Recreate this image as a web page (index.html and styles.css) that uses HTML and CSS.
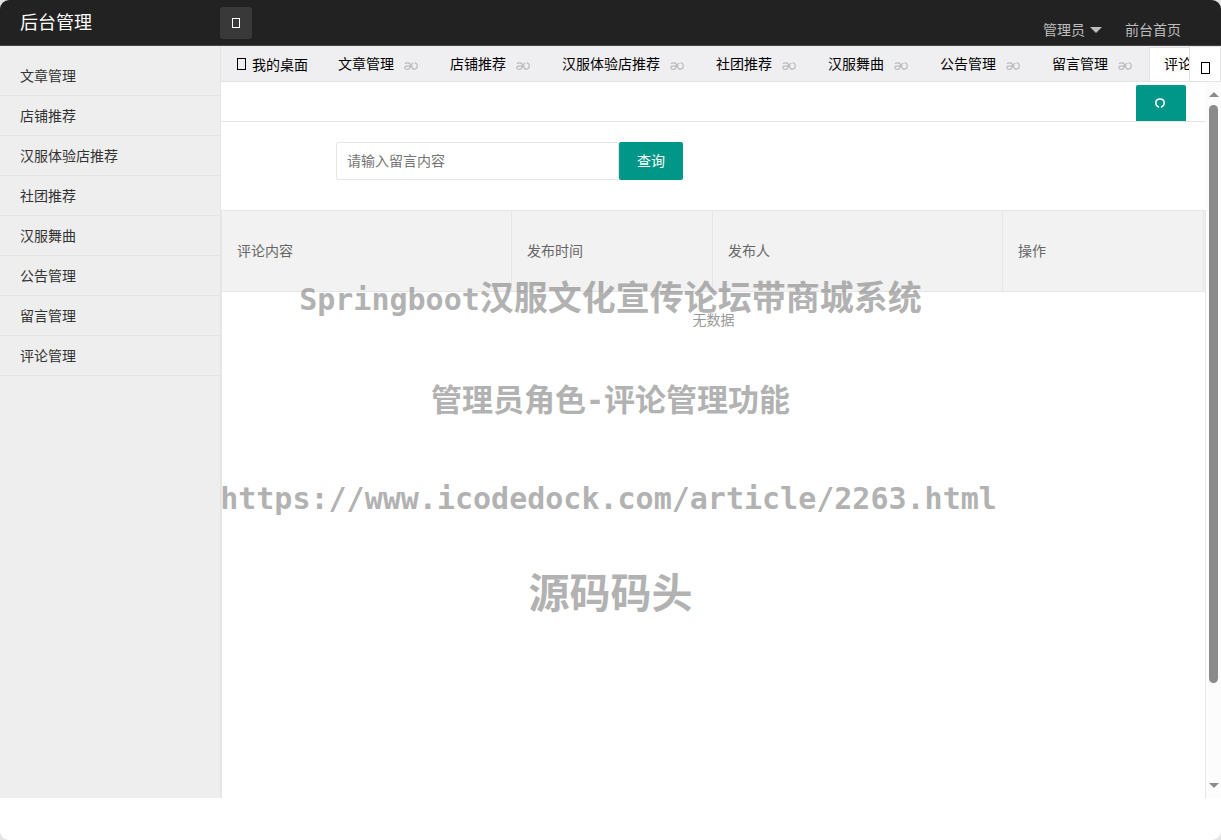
FILE: index.html
```html
<!DOCTYPE html>
<html lang="zh-CN">
<head>
<meta charset="utf-8">
<title>后台管理</title>
<link rel="stylesheet" href="styles.css">
</head>
<body>
<svg class="defs" aria-hidden="true">
  <symbol id="close" viewBox="0 0 14 8"><path d="M1 1.800C1.800.5 6.500-.1 6.500 3.700 6.500 8.200.8 8.200.8 5.500.8 4 2 3.900 6.200 3.900M9.300.9C6.800 1.800 7.200 7.200 10.300 7.200 14.200 7.200 14.200.8 10.600.8"/></symbol>
</svg>
<div class="app">
  <header class="header">
    <a class="logo" href="#">后台管理</a>
    <button class="toggle" aria-label="展开或收起菜单"><span class="box box-small"></span></button>
    <nav class="user-nav">
      <a href="#">管理员<span class="caret"></span></a>
      <a href="#">前台首页</a>
    </nav>
  </header>
  <div class="body">
    <nav class="sidebar">
      <a href="#">文章管理</a>
      <a href="#">店铺推荐</a>
      <a href="#">汉服体验店推荐</a>
      <a href="#">社团推荐</a>
      <a href="#">汉服舞曲</a>
      <a href="#">公告管理</a>
      <a href="#">留言管理</a>
      <a href="#">评论管理</a>
    </nav>
    <main class="main">
      <div class="tabbar">
        <div class="tabs">
          <a class="tab tab-home" href="#"><span class="box"></span>我的桌面</a>
          <a class="tab" href="#">文章管理<svg class="close"><use href="#close"/></svg></a>
          <a class="tab" href="#">店铺推荐<svg class="close"><use href="#close"/></svg></a>
          <a class="tab" href="#">汉服体验店推荐<svg class="close"><use href="#close"/></svg></a>
          <a class="tab" href="#">社团推荐<svg class="close"><use href="#close"/></svg></a>
          <a class="tab" href="#">汉服舞曲<svg class="close"><use href="#close"/></svg></a>
          <a class="tab" href="#">公告管理<svg class="close"><use href="#close"/></svg></a>
          <a class="tab" href="#">留言管理<svg class="close"><use href="#close"/></svg></a>
          <a class="tab active" href="#">评论管理</a>
        </div>
        <button class="more" aria-label="更多标签"><span class="box"></span></button>
      </div>
      <div class="frame">
        <section class="page">
          <div class="toolbar">
            <button class="refresh" aria-label="刷新"><svg viewBox="0 0 10 10"><path d="M4 9.200C-.6 7.500-.2.900 5 .9S10.600 7.500 6 9.200"/></svg></button>
          </div>
          <form class="search">
            <input type="text" placeholder="请输入留言内容" aria-label="留言内容">
            <button type="button">查询</button>
          </form>
          <div class="table-view">
            <table>
              <thead>
                <tr><th class="wide">评论内容</th><th class="narrow">发布时间</th><th class="wide">发布人</th><th class="narrow">操作</th><td class="gutter"></td></tr>
              </thead>
            </table>
            <p class="empty">无数据</p>
          </div>
        </section>
        <div class="scrollbar">
          <span class="arrow up"></span>
          <span class="thumb"></span>
          <span class="arrow down"></span>
        </div>
      </div>
    </main>
  </div>
  <footer class="footer"></footer>
  <div class="watermark">
    <p class="line-title"><span>Springboot</span>汉服文化宣传论坛带商城系统</p>
    <p class="line-role">管理员角色<span>-</span>评论管理功能</p>
    <p class="line-url">https://www.icodedock.com/article/2263.html</p>
    <p class="line-name">源码码头</p>
  </div>
</div>
</body>
</html>
```
FILE: styles.css
```css
* { box-sizing: border-box; }
body {
  margin: 0;
  background: #e4e4e4;
  font: 14px/20px "Noto Sans CJK SC", sans-serif;
  color: #333;
}
a { color: inherit; text-decoration: none; }
button { border: 0; padding: 0; font: inherit; cursor: pointer; }
p { margin: 0; }
.defs { position: absolute; width: 0; height: 0; }

.app {
  position: relative;
  display: flex;
  flex-direction: column;
  min-height: 100vh;
  background: #fff;
  border-radius: 9px;
  overflow: hidden;
}
.header {
  display: flex;
  height: 46px;
  background: #222;
  border-bottom: 1px solid #444;
  color: #fff;
}
.logo { width: 220px; padding-left: 20px; font-size: 18px; line-height: 42px; }
.toggle {
  display: grid;
  place-items: center;
  width: 32px;
  height: 32px;
  margin-top: 7px;
  border-radius: 3px;
  background: #393939;
  color: #fff;
}
.box { display: inline-block; width: 9px; height: 12px; border: 1px solid currentColor; }
.box-small { width: 8px; height: 10px; }
.user-nav {
  display: flex;
  gap: 23px;
  margin-left: auto;
  padding: 19px 40px 0 0;
  color: #bdbdbd;
}
.caret {
  display: inline-block;
  margin-left: 5px;
  border: 6px solid transparent;
  border-top-color: #bdbdbd;
  border-bottom: 0;
  vertical-align: 2px;
}

.body { display: flex; flex: 1; }
.sidebar {
  display: flex;
  flex-direction: column;
  width: 221px;
  padding-top: 10px;
  background: #eee;
  border-right: 1px solid #e5e5e5;
}
.sidebar a { padding: 9px 20px 10px; border-bottom: 1px solid #e5e5e5; }
.main { display: flex; flex: 1; flex-direction: column; min-width: 0; }
.tabbar { display: flex; height: 36px; background: #efeef0; border-bottom: 1px solid #e2e2e2; color: #000; }
.tabs { display: flex; flex: 1; min-width: 0; overflow: hidden; }
.tab { display: flex; flex: none; align-items: center; padding: 0 15px 2px; white-space: nowrap; }
.tab-home { gap: 6px; padding: 0 15px 0 16px; }
.tab.active { margin-top: 1px; padding: 0 14px 4px; background: #fff; border: 1px solid #e2e2e2; border-bottom: 0; }
.close { width: 14px; height: 8px; margin: 6px 2px 0 10px; fill: none; stroke: #bcbcbc; stroke-width: 1.2; }
.more {
  display: grid;
  place-items: center;
  width: 32px;
  padding-top: 8px;
  background: #fff;
  border: 1px solid #e2e2e2;
  border-bottom: 0;
}

.frame { display: flex; flex: 1; }
.page { display: flex; flex: 1; flex-direction: column; min-width: 0; }
.toolbar {
  display: flex;
  align-items: flex-end;
  justify-content: flex-end;
  height: 40px;
  padding-right: 20px;
  border-bottom: 1px solid #e5e5e5;
}
.refresh { width: 50px; height: 36px; padding: 0 2px 2px 0; background: #009688; border-radius: 2px 2px 0 0; }
.refresh svg { width: 10px; height: 10px; fill: none; stroke: #fff; stroke-width: 1.5; }
.search { display: flex; padding: 20px 115px 30px; }
.search input {
  width: 283px;
  height: 38px;
  padding: 0 10px 2px;
  border: 1px solid #e6e6e6;
  border-radius: 2px;
  font: inherit;
}
.search input::placeholder { color: #757575; }
.search button { width: 64px; height: 38px; padding-bottom: 2px; background: #009688; border-radius: 2px; color: #fff; }
.table-view { flex: 1; border: 1px solid #e6e6e6; border-bottom: 0; }
table { width: 100%; table-layout: fixed; border-collapse: separate; border-spacing: 0; background: #f2f2f2; color: #666; }
th, .gutter { height: 81px; padding: 0 15px 2px; border: solid #e6e6e6; border-width: 0 1px 1px 0; font-weight: 400; text-align: left; }
.wide { width: 290px; }
.narrow { width: 201px; }
.gutter { width: auto; padding: 0; border-right: 0; }
.empty { padding: 17px 0; text-align: center; color: #999; }

.scrollbar {
  display: flex;
  flex-direction: column;
  align-items: center;
  width: 15px;
  padding: 10px 0;
  background: #fcfcfc;
}
.arrow { border: 5px solid transparent; }
.up { border-top: 0; border-bottom-color: #8b8b8b; }
.down { border-bottom: 0; border-top-color: #8b8b8b; }
.thumb { width: 9px; height: 83%; margin: 8px 0 auto; border-radius: 5px; background: #8b8b8b; }
.footer { height: 42px; }

.watermark {
  position: absolute;
  top: 271px;
  left: 0;
  width: 100%;
  color: #808080;
  font-weight: 700;
  text-align: center;
  white-space: nowrap;
  opacity: 0.6;
  pointer-events: none;
}
.line-title { font-size: 34px; line-height: 50px; }
.line-title span, .line-role span, .line-url { font-family: "DejaVu Sans Mono", monospace; font-size: 30px; }
.line-role { margin-top: 48px; font-size: 31px; line-height: 50px; }
.line-url { margin-top: 48px; padding-right: 4px; line-height: 50px; }
.line-name { margin-top: 36px; font-size: 41px; line-height: 60px; }
```
